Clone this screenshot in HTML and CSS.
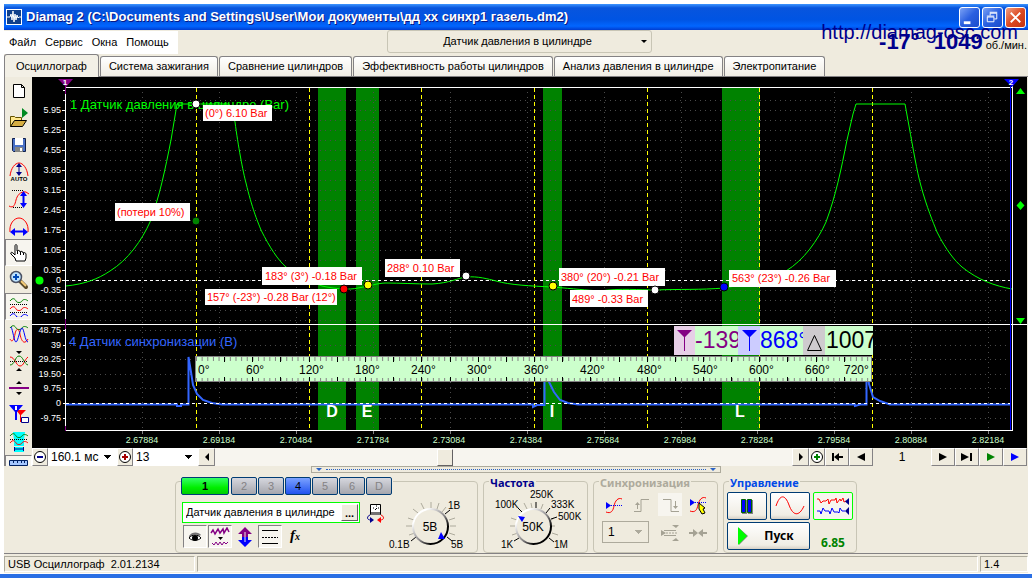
FILE: index.html
```html
<!DOCTYPE html>
<html lang="ru">
<head>
<meta charset="utf-8">
<title>Diamag 2</title>
<link rel="stylesheet" href="styles.css">
</head>
<body>
<div class="app">
  <header class="titlebar">
    <svg class="app-icon" viewBox="0 0 16 16"><rect x="0.500" y="0.500" width="15" height="15" fill="#10408c" stroke="#fff"/><path d="M1 8h3l1-3 1 6 1-9 1 11 1-8 1 6 1-5 1 3 1-1h2" fill="none" stroke="#fff"/></svg>
    <h1 class="title">Diamag 2 (C:\Documents and Settings\User\Мои документы\дд хх синхр1 газель.dm2)</h1>
    <button class="win-btn" aria-label="Свернуть"><svg viewBox="0 0 20 20"><path d="M4 14h7v3H4z" fill="#fff"/></svg></button>
    <button class="win-btn" aria-label="Восстановить"><svg viewBox="0 0 20 20"><path d="M7.500 8V5.500h7v6H12M7 4.500h8M4.500 9.500h7v5h-7zM4 8.500h8" fill="none" stroke="#fff"/></svg></button>
    <button class="win-btn win-close" aria-label="Закрыть"><svg viewBox="0 0 20 20"><path d="M5 5l10 10M15 5L5 15" stroke="#fff" stroke-width="2"/></svg></button>
  </header>

  <div class="menu-row">
    <nav class="menu">
      <button>Файл</button><button>Сервис</button><button>Окна</button><button>Помощь</button>
    </nav>
    <button class="sensor-pick"><span>Датчик давления в цилиндре</span><i class="caret"></i></button>
    <div class="readout"><b>-17°</b><b>1049</b><span>об./мин.</span></div>
    <a class="site" href="#">http://diamag-osc.com</a>
  </div>

  <div class="tabs" role="tablist">
    <button class="tab tab-on" role="tab">Осциллограф</button>
    <button class="tab" role="tab">Система зажигания</button>
    <button class="tab" role="tab">Сравнение цилиндров</button>
    <button class="tab" role="tab">Эффективность работы цилиндров</button>
    <button class="tab" role="tab">Анализ давления в цилиндре</button>
    <button class="tab" role="tab">Электропитание</button>
  </div>

  <main class="work">
    <div class="tools">
      <button class="tool" aria-label="Новый"><svg viewBox="0 0 20 20"><path d="M4.500 3.500h8l3 3v10h-11zM12.500 3.500v3h3" fill="#fff" stroke="#000"/></svg></button>
      <button class="tool" aria-label="Открыть"><svg viewBox="0 0 20 20"><path d="M1.500 18.500v-10h4l1 1h6v3" fill="#ffe78c" stroke="#635100"/><path d="M1.500 18.500l4-6h12l-4 6z" fill="#d6ae42" stroke="#000"/><path d="M13 0l6 5-6 5z" fill="#008a21"/></svg></button>
      <button class="tool" aria-label="Сохранить"><svg viewBox="0 0 20 20"><path d="M3.500 3.500h13v13h-12l-1-1z" fill="#4a71c6" stroke="#10204a"/><path d="M6 3h8v7H6z" fill="#fff"/><path d="M6 12h8v5H6z" fill="#848684"/><path d="M11 13h2v3h-2z" fill="#fff"/></svg></button>
      <button class="tool" aria-label="Авто"><svg viewBox="0 0 20 20"><path d="M1 14C2 6 6 1 10 1s8 5 9 13" fill="none" stroke="#f00"/><path d="M10 3v9" stroke="#00008c" stroke-width="1"/><path d="M7 5l3-4 3 4zM7 10l3 4 3-4z" fill="#00008c"/><text x="10" y="19" class="mini">AUTO</text></svg></button>
      <button class="tool" aria-label="Высота"><svg viewBox="0 0 20 20"><path d="M0 17c5 3 6-2 7-6s4-9 10-8l3 2" fill="none" stroke="#f00"/><path d="M3 1.500h11M4 18.500h10" stroke="#000" stroke-dasharray="1 1"/><path d="M14.500 5v10" stroke="#00f" stroke-width="2"/><path d="M11 7l3.500-5L18 7zM11 14l3.500 5 3.500-5z" fill="#00f"/></svg></button>
      <button class="tool" aria-label="Ширина"><svg viewBox="0 0 20 20"><path d="M1 16C0 8 5 2 10 2s10 6 9 14" fill="none" stroke="#f00"/><path d="M4 15.500h12" stroke="#00f" stroke-width="2"/><path d="M6 12l-5 4 5 4zM14 12l5 4-5 4z" fill="#00f"/></svg></button>
      <button class="tool tool-on" aria-label="Рука"><svg viewBox="0 0 20 20"><path d="M7 18l-1-3-4-4c-1-2 1-2 2-1l2 2V3c0-2 2-2 2 0v5c1-1 3-1 3 1 1-1 3-1 3 1 1-1 3 0 3 1v4l-1 3z" fill="#fff" stroke="#000"/><path d="M8.500 8v3M11.500 9v3M14.500 10v2" stroke="#000"/></svg></button>
      <button class="tool" aria-label="Масштаб"><svg viewBox="0 0 20 20"><path d="M11 11l6 6" stroke="#5a4a29" stroke-width="4" stroke-linecap="round"/><path d="M12 11l5 5" stroke="#f7cf7b" stroke-width="2"/><circle cx="7" cy="7" r="5.500" fill="#bde3ff" stroke="#4a5163" stroke-width="1.500"/><path d="M4 7h6M7 4v6" stroke="#0049b5" stroke-width="2"/></svg></button>
      <button class="tool tool-on" aria-label="Раздельно"><svg viewBox="0 0 20 20"><g fill="none"><path d="M1 4c3-4 5-2 6 0s5 2 6 0 4-2 6 0" stroke="#008200"/><path d="M1 12c3-4 5-2 6 0s5 2 6 0 4-2 6 0" stroke="#f00"/><path d="M1 19c3-4 5-2 6 0s5 2 6 0 4-2 6 0" stroke="#00f"/><path d="M1 7.500h18M1 15.500h18" stroke="#000" stroke-dasharray="1 1"/></g></svg></button>
      <button class="tool" aria-label="Совместно"><svg viewBox="0 0 20 20"><g fill="none"><path d="M1 4c3-4 5-2 6 0s5 2 6 0 4-2 6 0" stroke="#008200"/><path d="M1 15c2 4 4 1 5-5s4-6 5 0 4 12 8 5" stroke="#f00"/><path d="M2 3c2 3 3 15 5 15S11 4 13 4s3 14 6 14" stroke="#00f"/></g></svg></button>
      <button class="tool" aria-label="Сжать"><svg viewBox="0 0 20 20"><path d="M1 6c5 0 6 9 10 9s4-6 8-9" fill="none" stroke="#f00"/><path d="M1 14c5 0 5-9 9-9s5 8 9 9" fill="none" stroke="#008200"/><path d="M1 10.500h18" stroke="#000" stroke-dasharray="1 1"/><path d="M7 0h6l-3 3zM7 20h6l-3-3z"/></svg></button>
      <button class="tool" aria-label="Линия"><svg viewBox="0 0 20 20"><path d="M0 9h20v2H0z" fill="#840084"/><path d="M7 6h6l-3-3zM7 14h6l-3 3z"/></svg></button>
      <button class="tool" aria-label="Маркеры"><svg viewBox="0 0 20 20"><path d="M7 5h10l-5 5v7h-1v-7z" fill="#f00"/><path d="M0 0h14L8 7v8H6V7z" fill="#00f"/><path d="M6 1h2v4H6z" fill="#fff"/><path d="M12.500 12.500h7v5h-7z" fill="#fff" stroke="#00008c"/></svg></button>
      <button class="tool" aria-label="Интервал"><svg viewBox="0 0 20 20"><path d="M4 0h12l-1 8v6H5V8z" fill="#0ff"/><path d="M4 0h12l-3 3H7zM5 15h10v5H5z" fill="#0ff"/><path d="M1 4c3-4 5-2 6 0s5 2 6 0 4-2 6 0" fill="none" stroke="#008200"/><path d="M1 11c3-4 5-2 6 0s5 2 6 0 4-2 6 0" fill="none" stroke="#f00"/><path d="M1 7.500h18" stroke="#000" stroke-dasharray="1 1"/><path d="M5.500 15v4M14.500 15v4M6 17h8" stroke="#00008c"/></svg></button>
      <button class="tool tool-on tool-cut" aria-label="Линейка"><svg viewBox="0 0 20 20"><path d="M0.500 4.500h18v5h-18z" fill="#a5c7ff" stroke="#002163"/><path d="M4.500 5v2M8.500 5v2M12.500 5v2M15.500 5v2" stroke="#002163"/></svg></button>
    </div>

    <div class="scope-col">
      <svg class="scope" viewBox="32 77 995 371">
        <defs>
          <pattern id="rows-a" x="70" y="100" width="5" height="10" patternUnits="userSpaceOnUse"><rect width="1" height="1" fill="#4a4a4a"/></pattern>
          <clipPath id="c1"><rect x="674" y="326" width="64" height="29"/></clipPath>
          <clipPath id="c2"><rect x="738" y="326" width="65" height="29"/></clipPath>
          <clipPath id="c3"><rect x="803" y="326" width="70" height="29"/></clipPath>
        </defs>
        <rect x="32" y="77" width="995" height="371"/>
        <path d="M318 88h28v342h-28zM356 88h23v342h-23zM543 88h19v342h-19zM722 88h38v342h-38z" fill="#008200"/>
        <rect x="67" y="100" width="944" height="221" fill="url(#rows-a)"/>
        <path class="dots" d="M70 330.500h940M70 345.500h940M70 359.500h940M70 374.500h940M70 388.500h940M70 418.500h940"/>
        <path class="dots" d="M142.500 92v338M219.500 92v338M296.500 92v338M373.500 92v338M450.500 92v338M527.500 92v338M604.500 92v338M681.500 92v338M757.500 92v338M834.500 92v338M911.500 92v338M988.500 92v338"/>
        <text class="name-a" x="70" y="109">1 Датчик давления в цилиндре (Bar)</text>
        <text class="name-b" x="69" y="346">4 Датчик синхронизации (В)</text>
        <path class="zero" d="M66 280.500h945"/>
        <path class="trdc" d="M196.500 88v342M309.500 88v342M421.500 88v342M534.500 88v342M647.500 88v342M759.500 88v342M872.500 88v342"/>
        <path class="wave-a" d="M66 286C85 284 98 279 110 271C128 260 142 240 150 222C160 195 165 170 171 140L177 104H229L235 122C238 145 243 172 246 183C252 208 257 220 261 230C270 248 278 260 286 267C300 278 310 281 322 286C335 289 350 290 358 288C370 286 378 283 386 283C400 283 415 284 432 284C450 283 458 278 466 277C478 276 488 279 496 281C510 285 530 286 553 287C575 289 585 290 600 291C620 288 640 290 655 290C680 289 700 290 724 288C745 284 770 282 786 271C804 260 818 240 826 222C836 195 841 170 847 140L853 114L856 104H905L909 126C913 148 917 172 921 186C927 208 933 222 937 232C946 250 955 261 962 267C978 280 995 286 1012 289"/>
        <path class="wave-b" d="M66 404.500H177V406H181V404.500H188.500V357L191 372L193 385L197 394L203 400L212 403L222 404.500H533V407L537 405H544.500V356L549 382L554 392L560 400L568 403L578 404.500H855V406L860 404.500H866.500V360L869 384L873 397L880 401L890 404.500H1011"/>
        <path class="zero" d="M66 403.500h945"/>
        <path class="frame" d="M65.500 84V431M66 87.500h947M32 324.500h995M65 430.500h948M1012.500 84V431"/>
        <path d="M1010.500 86V430" stroke="#00f"/>
        <path class="frame" d="M63 90.500h3M63 100.500h3M62 110.500h4M63 120.500h3M62 130.500h4M63 140.500h3M62 150.500h4M63 160.500h3M62 170.500h4M63 180.500h3M62 190.500h4M63 200.500h3M62 210.500h4M63 220.500h3M62 230.500h4M63 240.500h3M62 250.500h4M63 260.500h3M62 270.500h4M62 280.500h4M62 290.500h4M63 300.500h3M62 310.500h4M63 330.500h3M63 345.500h3M63 359.500h3M63 374.500h3M63 388.500h3M63 403.500h3M63 418.500h3"/>
        <path d="M142.500 431v3M219.500 431v3M296.500 431v3M373.500 431v3M450.500 431v3M527.500 431v3M604.500 431v3M681.500 431v3M757.500 431v3M834.500 431v3M911.500 431v3M988.500 431v3" stroke="#848284"/>
        <path d="M65.500 86v8M65.500 319v10M65.500 426v5" stroke="#840084"/>
        <g class="y-num">
          <text x="61" y="113">5.95</text><text x="61" y="133">5.25</text><text x="61" y="153">4.55</text><text x="61" y="173">3.85</text><text x="61" y="193">3.15</text><text x="61" y="213">2.45</text><text x="61" y="233">1.75</text><text x="61" y="253">1.05</text><text x="61" y="273">0.35</text><text x="61" y="283">0</text><text x="61" y="293">-0.35</text><text x="61" y="313">-1.05</text>
          <text x="61" y="333">48.75</text><text x="61" y="348">39</text><text x="61" y="362">29.25</text><text x="61" y="377">19.50</text><text x="61" y="391">9.75</text><text x="61" y="406">0</text><text x="61" y="421">-9.75</text>
        </g>
        <g class="x-num">
          <text x="142" y="443">2.67884</text><text x="219" y="443">2.69184</text><text x="296" y="443">2.70484</text><text x="373" y="443">2.71784</text><text x="449" y="443">2.73084</text><text x="526" y="443">2.74384</text><text x="603" y="443">2.75684</text><text x="680" y="443">2.76984</text><text x="757" y="443">2.78284</text><text x="834" y="443">2.79584</text><text x="911" y="443">2.80884</text><text x="988" y="443">2.82184</text>
        </g>
        <g class="zone"><text x="332" y="417">D</text><text x="367" y="417">E</text><text x="552" y="417">I</text><text x="740" y="417">L</text></g>

        <path d="M58 79h15l-7 8z" fill="#840084"/><path d="M1004 79h15l-7 8z" fill="#00f"/>
        <g class="flag"><text x="65" y="85">1</text><text x="1011" y="85">2</text></g>
        <path d="M1016 94h9l-4.500-6zM1016 318h9l-4.500 6zM1020.500 201l4 4.500-4 4.500-4-4.500z" fill="#0f0"/>
        <circle cx="39.500" cy="280.500" r="4" fill="#0f0"/>

        <g class="plates"><rect x="203" y="105" width="69" height="16"/><rect x="115" y="203" width="75" height="18"/><rect x="262" y="267" width="100" height="18"/><rect x="205" y="289" width="132" height="16"/><rect x="385" y="259" width="75" height="18"/><rect x="559" y="268" width="106" height="18"/><rect x="570" y="290" width="78" height="17"/><rect x="729" y="270" width="107" height="17"/></g>
        <g class="notes"><text x="205" y="117">(0°) 6.10 Bar</text><text x="117" y="216">(потери 10%)</text><text x="265" y="280">183° (3°) -0.18 Bar</text><text x="207" y="301">157° (-23°) -0.28 Bar (12°)</text><text x="387" y="272">288° 0.10 Bar</text><text x="561" y="281">380° (20°) -0.21 Bar</text><text x="572" y="303">489° -0.33 Bar</text><text x="732" y="282">563° (23°) -0.26 Bar</text></g>
        <g class="points"><circle cx="196" cy="104" r="4" fill="#fff"/><circle cx="196" cy="221" r="4" fill="#008200"/><circle cx="344" cy="289" r="4" fill="#f00"/><circle cx="368" cy="285" r="4" fill="#ff0"/><circle cx="466" cy="276" r="4" fill="#fff"/><circle cx="553" cy="286" r="4" fill="#ff0"/><circle cx="655" cy="290" r="4" fill="#fff"/><circle cx="724" cy="287" r="4" fill="#00f"/></g>

        <rect x="195.500" y="356.500" width="676" height="25" fill="#cfc" stroke="#848284"/>
        <path d="M196 359H871M196 380H871" stroke="#848284" stroke-width="4" stroke-dasharray="1 4.640"/>
        <path class="majors" d="M224.500 357v5M252.500 357v5M280.500 357v5M309.500 357v5M337.500 357v5M365.500 357v5M393.500 357v5M421.500 357v5M450.500 357v5M478.500 357v5M506.500 357v5M534.500 357v5M562.500 357v5M590.500 357v5M619.500 357v5M647.500 357v5M675.500 357v5M703.500 357v5M731.500 357v5M759.500 357v5M787.500 357v5M816.500 357v5M844.500 357v5M224.500 377v4M252.500 377v4M280.500 377v4M309.500 377v4M337.500 377v4M365.500 377v4M393.500 377v4M421.500 377v4M450.500 377v4M478.500 377v4M506.500 377v4M534.500 377v4M562.500 377v4M590.500 377v4M619.500 377v4M647.500 377v4M675.500 377v4M703.500 377v4M731.500 377v4M759.500 377v4M787.500 377v4M816.500 377v4M844.500 377v4"/>
        <g class="degrees"><text x="198" y="374">0°</text><text x="246" y="374">60°</text><text x="299" y="374">120°</text><text x="355" y="374">180°</text><text x="411" y="374">240°</text><text x="467" y="374">300°</text><text x="524" y="374">360°</text><text x="580" y="374">420°</text><text x="637" y="374">480°</text><text x="693" y="374">540°</text><text x="749" y="374">600°</text><text x="805" y="374">660°</text><text x="844" y="374">720°</text></g>

        <rect x="674" y="326" width="199" height="29" fill="#cfc"/>
        <rect x="674" y="326" width="21" height="29" fill="#e7cfe7"/><rect x="738" y="326" width="22" height="29" fill="#ccf"/><rect x="803" y="326" width="22" height="29" fill="#cecbce"/>
        <path d="M677 330h15l-7 7v14h-1v-14z" fill="#840084"/><path d="M742 330h15l-7 7v14h-1v-14z" fill="#00f"/><path d="M807.500 350.500l7-15 7 15z" fill="none" stroke="#000"/>
        <g class="deltas"><text x="695" y="348" fill="#840084" clip-path="url(#c1)">-139°</text><text x="760" y="348" fill="#00f" clip-path="url(#c2)">868°</text><text x="826" y="348" clip-path="url(#c3)">1007°</text></g>
      </svg>

      <div class="transport">
        <button class="zoom-btn" aria-label="Уменьшить"><svg viewBox="0 0 14 14"><circle cx="7" cy="7" r="5.500" fill="#fff" stroke="#000"/><path d="M4 7h6" stroke="#00008c" stroke-width="2"/></svg></button>
        <select class="span-pick" aria-label="Развёртка"><option>160.1 мс</option></select>
        <button class="zoom-btn" aria-label="Увеличить"><svg viewBox="0 0 14 14"><circle cx="7" cy="7" r="5.500" fill="#fff" stroke="#000"/><path d="M4 7h6M7 4v6" stroke="#a50000" stroke-width="2"/></svg></button>
        <select class="scale-pick" aria-label="Масштаб"><option>13</option></select>
        <button class="step" aria-label="Назад"><svg viewBox="0 0 14 14"><path d="M9 3v8L5 7z"/></svg></button>
        <input class="scroll" type="range" min="0" max="1000" value="396" aria-label="Прокрутка">
        <button class="step" aria-label="Вперёд"><svg viewBox="0 0 14 14"><path d="M5 3v8l4-4z"/></svg></button>
        <button class="zoom-btn" aria-label="Добавить"><svg viewBox="0 0 14 14"><circle cx="7" cy="7" r="5.500" fill="#fff" stroke="#000"/><path d="M4 7h6M7 4v6" stroke="#008200" stroke-width="2"/></svg></button>
        <button class="play" aria-label="В начало"><svg viewBox="0 0 14 14"><path d="M2 3h2v8H2zM9 3v8L4 7zM9 6h4v2H9z"/></svg></button>
        <button class="play" aria-label="Предыдущий"><svg viewBox="0 0 14 14"><path d="M11 3v8L3 7z"/></svg></button>
        <output class="frame-no">1</output>
        <button class="play" aria-label="Следующий"><svg viewBox="0 0 14 14"><path d="M3 3v8l8-4z"/></svg></button>
        <button class="play" aria-label="В конец"><svg viewBox="0 0 14 14"><path d="M1 3v8l8-4zM10 3h2v8h-2z"/></svg></button>
        <button class="play" aria-label="Воспроизвести"><svg viewBox="0 0 14 14"><path d="M3 3v8l8-4z" fill="#008200"/></svg></button>
        <button class="play" aria-label="Непрерывно"><svg viewBox="0 0 14 14"><path d="M3 3v8l8-4z" fill="#00f"/></svg></button>
      </div>
    </div>
  </main>

  <div class="splitter"><i class="notch"></i><i class="rail"></i><i class="notch"></i></div>

  <section class="panel">
    <div class="group group-channel">
      <div class="channels">
        <button class="ch ch-main">1</button><button class="ch">2</button><button class="ch">3</button><button class="ch ch-on">4</button><button class="ch">5</button><button class="ch">6</button><button class="ch">D</button>
      </div>
      <div class="channel-body">
        <div class="channel-left">
          <div class="sensor-row">
            <div class="sensor-box"><input type="text" value="Датчик давления в цилиндре" aria-label="Датчик"><button class="dots-btn">...</button></div>
            <button class="flat" aria-label="Калибровка"><svg viewBox="0 0 20 20"><path d="M4.500 1.500h10v10h-10z" fill="#fff" stroke="#000"/><path d="M5 9h9v3H5z" fill="#737173"/><path d="M7 5h1M10 3h1M12 5h1M9 7l2-2" stroke="#000"/><path d="M4 12c-3 1-4 5 1 5" fill="none" stroke="#00008c"/><path d="M4 14l4 3-4 3z" fill="#00008c"/><path d="M15 12c3 1 4 5-1 5" fill="none" stroke="#f00"/><path d="M15 14l-4 3 4 3z" fill="#f00"/></svg></button>
          </div>
          <div class="mode-row">
            <button class="flat flat-on" aria-label="Видимость"><svg viewBox="0 0 20 20"><path d="M4 9c3-5 10-4 12-1l-2 1c-3-3-7-2-10 2z" fill="#737173"/><path d="M4 11c3-4 9-4 12 0-3 3-9 3-12 0z" fill="#fff" stroke="#000"/><circle cx="10" cy="11" r="3"/></svg></button>
            <button class="flat flat-on" aria-label="Фильтр"><svg viewBox="0 0 20 20"><path d="M1 6l2-3 2 4 3-5 2 4 3-4 1 4 3-5 2 4" fill="none" stroke="#840084" stroke-width="1.500"/><path d="M8 10h5l-2.500 3z"/><path d="M2 16l2 2 2-3 2 3 2-3 2 3 2-3 2 2 2-2" fill="none" stroke="#840084"/></svg></button>
            <button class="flat" aria-label="Инверсия"><svg viewBox="0 0 20 20"><path d="M10 0l7 7h-4v3H7V7H3z" fill="#840084"/><path d="M10 20l7-7h-4v-3H7v3H3z" fill="#00f"/><path d="M10 5v10" stroke="#efebde"/></svg></button>
            <button class="flat flat-on" aria-label="Сетка"><svg viewBox="0 0 20 20"><path d="M2 3.500h16M2 16.500h16" stroke="#000"/><path d="M2 10.500h16" stroke="#000" stroke-dasharray="2 1"/></svg></button>
            <button class="flat fx" aria-label="Функция"><i>f</i><sub>x</sub></button>
          </div>
        </div>
        <svg class="knob knob-volt" viewBox="386 488 90 64">
          <defs><linearGradient id="rim" x1="0" y1="0" x2="1" y2="1"><stop offset="0.200" stop-color="#fff"/><stop offset="0.550" stop-color="#848284"/><stop offset="0.750" stop-color="#000"/></linearGradient></defs>
          <path class="ticks" d="M414 533l-6 2M412 526h-7M413 520l-6-2M417 513l-5-4M423 509l-3-6M430 508v-6M436 509l2-6M441 512l4-5M448 520l6-2M449 526h6M448 533l6 2"/>
          <path class="ticks-hi" d="M444 514l5-4M415 537l-5 4M446 537l5 4"/>
          <circle cx="429.500" cy="526.500" r="17.500" fill="#efebde" stroke="url(#rim)" stroke-width="2"/>
          <path d="M440 532l4 7h-7z" fill="#00f"/>
          <text class="knob-val" x="429" y="531">5В</text><text x="447" y="509">1В</text><text x="388" y="548">0.1В</text><text x="450" y="548">5В</text>
        </svg>
      </div>
    </div>

    <div class="group group-rate">
      <h2 class="legend legend-navy">Частота</h2>
      <svg class="knob knob-rate" viewBox="486 488 98 64">
        <path class="ticks" d="M518 533l-6 2M516 526h-6M517 520l-6-2M527 509l-3-6M532 508l-1-5M541 509l2-5M554 518l-4 3M555 526h-5M552 533l6 2"/>
        <path class="ticks-hi" d="M522 512l-4-4M536 508v-6M546 513l4-5M551 519l6-2M519 538l-5 3M549 538l5 4"/>
        <circle cx="533.500" cy="526.500" r="17.500" fill="#efebde" stroke="url(#rim)" stroke-width="2"/>
        <path d="M518 516l7 1-3 5z" fill="#00f"/>
        <text class="knob-val" x="533" y="531">50K</text><text x="530" y="498">250K</text><text x="495" y="508">100K</text><text x="551" y="508">333K</text><text x="558" y="520">500K</text><text x="501" y="548">1K</text><text x="554" y="548">1M</text>
      </svg>
    </div>

    <div class="group group-sync">
      <h2 class="legend legend-gray">Синхронизация</h2>
      <div class="sync-grid">
        <button class="flat" aria-label="Уровень"><svg viewBox="0 0 20 20"><path d="M2 17c5 2 7-1 8-6s4-9 8-7" fill="none" stroke="#f00"/><path d="M5 10.500h14" stroke="#00f" stroke-dasharray="1 1"/><path d="M2 7l5 3.500L2 14z" fill="#00f"/></svg></button>
        <button class="flat" aria-label="Фронт" disabled><svg viewBox="0 0 20 20"><path d="M2 16.500h7v-12h8" fill="none" stroke="#a5a294"/><path d="M5.500 14V8" stroke="#a5a294"/><path d="M3 10l2.500-3L8 10z" fill="#a5a294"/></svg></button>
        <button class="flat flat-check" aria-label="Спад" disabled><svg viewBox="0 0 20 20"><path d="M3 4.500h8v12h8" fill="none" stroke="#a5a294"/><path d="M15.500 6v6" stroke="#a5a294"/><path d="M13 11l2.500 3 2.500-3z" fill="#a5a294"/></svg></button>
        <button class="flat" aria-label="Автоуровень"><svg viewBox="0 0 20 20"><path d="M2 16c5 2 7-1 8-6s4-9 8-7" fill="none" stroke="#f00"/><path d="M5 7.500h14" stroke="#00f" stroke-dasharray="1 1"/><path d="M2 4l5 3.500L2 11z" fill="#00f"/><path d="M11 8l6 5-2 1 2 4-3 1-3-5z" fill="#ff0" stroke="#000"/></svg></button>
        <select class="sync-pick" aria-label="Канал синхронизации"><option>1</option></select>
        <button class="flat" aria-label="Порог" disabled><svg viewBox="0 0 20 20"><path d="M1 7l5 3-5 3zM12 2h7l-3 3zM12 18h7l-3-3z" fill="#a5a294"/><path d="M4 7.500h12M4 12.500h12" stroke="#a5a294"/><path d="M6 10h11" stroke="#a5a294" stroke-dasharray="2 1"/></svg></button>
        <button class="flat" aria-label="Гистерезис" disabled><svg viewBox="0 0 20 20"><path d="M1 9h4V6l5 4-5 4v-3H1zM19 9h-4V6l-5 4 5 4v-3h4z" fill="#a5a294"/></svg></button>
      </div>
    </div>

    <div class="group group-run">
      <h2 class="legend legend-blue">Управление</h2>
      <div class="run-grid">
        <button class="xp" aria-label="Пауза"><svg viewBox="0 0 30 20"><path d="M10 4h5v14h-5zM16 4h5v14h-5z" fill="#848284"/><path d="M9.500 3.500h4v13h-4zM15.500 3.500h4v13h-4z" fill="#00f" stroke="#006500"/></svg></button>
        <button class="xp" aria-label="Один канал"><svg viewBox="0 0 30 20"><path d="M1 10C5-2 10-2 14 9s10 12 15 1" fill="none" stroke="#f00"/></svg></button>
        <button class="xp xp-on" aria-label="Два канала"><svg viewBox="0 0 32 20"><path d="M0 3h2l2 4 2-2h3l2-2 1 5 2-4h4l1-2 1 5 3-4 1 2 2-3 1 4 2-1" fill="none" stroke="#f00"/><path d="M0 15h3l1 3 2-6 2 3h4l1 3 2-6 2 4h4l1 1 1-5 2 3h3" fill="none" stroke="#00f"/><path d="M32 2v7l-4-3.500zM32 11v8l-4-4z" fill="#00008c"/></svg></button>
        <button class="xp xp-run"><svg viewBox="0 0 12 20"><path d="M2 2l9 8-9 9z" fill="#848284"/><path d="M1 1l9 9-9 9z" fill="#0f0"/></svg><span>Пуск</span></button>
        <output class="fps">6.85</output>
      </div>
    </div>
  </section>

  <footer class="status"><span class="cell">USB Осциллограф&nbsp; 2.01.2134</span><span class="cell cell-wide"></span><span class="cell cell-end">1.4</span></footer>
</div>
<div class="desktop-strip"></div>
</body>
</html>
```
FILE: styles.css
```css
* { box-sizing: border-box; }
body { margin: 0; background: #fff; font: 11px/13px "Liberation Sans", Arial, sans-serif; color: #000; overflow: hidden; }
button, select, input { font: inherit; color: inherit; margin: 0; padding: 0; border: 0; background: none; border-radius: 0; }
h1, h2 { margin: 0; }
svg { display: block; }
.app { margin: 4px 4px 0; background: #efebde; }

.titlebar { display: flex; align-items: center; gap: 2px; height: 26px; padding: 0 2px; background: linear-gradient(#3d95ff 0, #0855dd 15%, #0054e3 60%, #0166ff 85%, #003dd0 100%); }
.app-icon { width: 16px; height: 16px; }
.title { flex: 1; padding-left: 2px; font: bold 13px/16px "Liberation Sans", Arial, sans-serif; color: #fff; text-shadow: 1px 1px #0a1883; white-space: nowrap; overflow: hidden; }
.win-btn { width: 21px; height: 21px; border: 1px solid #fff; border-radius: 3px; background: linear-gradient(135deg, #7ba2f5, #2a5fe0 50%, #1a4dcc); }
.win-close { background: linear-gradient(135deg, #f0a084, #dd4a22 50%, #c43310); }

.menu-row { position: relative; display: grid; grid-template-columns: 383px 265px 1fr; height: 24px; align-items: start; }
.menu { display: flex; gap: 9px; justify-self: start; height: 23px; padding: 0 9px 0 5px; background: #fff; margin-top: 1px; }
.sensor-pick { display: flex; align-items: center; height: 23px; border: 1px solid #c8c5b5; border-radius: 3px; padding: 0 4px 0 6px; }
.sensor-pick span { flex: 1; }
.caret { border: 3px solid transparent; border-top-color: #000; border-bottom: 0; }
.readout { display: flex; justify-content: flex-end; align-items: baseline; padding: 1px 1px 0 0; color: #00008c; }
.readout b { font: bold 22px/22px "Liberation Sans", Arial, sans-serif; margin-right: 14px; }
.readout b + b { margin-right: 3px; }
.readout span { color: #000; }
.site { position: absolute; right: 10px; top: -8px; font: 20px/20px "Liberation Sans", Arial, sans-serif; color: #00008c; text-decoration: none; white-space: nowrap; }

.tabs { display: flex; align-items: flex-end; height: 23px; border-bottom: 1px solid #848284; gap: 1px; }
.tab { height: 20px; padding: 0 8px; border: 1px solid #848284; border-bottom: 0; border-radius: 3px 3px 0 0; background: linear-gradient(#fff, #f0ede4); white-space: nowrap; }
.tab-on { height: 23px; margin-bottom: -1px; padding: 0 11px; background: #f3f0e6; }

.work { display: grid; grid-template-columns: 28px 1fr; padding-right: 1px; }
.tools { display: flex; flex-direction: column; height: 0; min-height: 100%; overflow: hidden; border-left: 1px solid #848284; }
.tool { flex: none; height: 27px; display: grid; place-items: center; }
.tool svg { width: 20px; height: 20px; }
.tool-on, .flat-on { border: 1px solid; border-color: #848284 #fff #fff #848284; background: #f7f5ef; }
.tool-cut { align-items: start; }
.mini { font: bold 6px "Liberation Sans", sans-serif; text-anchor: middle; }

.scope { width: 100%; height: auto; font-family: "Liberation Sans", Arial, sans-serif; }
.dots { stroke: #4a4a4a; stroke-dasharray: 1 4; fill: none; }
.name-a { font-size: 13px; fill: #0f0; }
.name-b { font-size: 13px; fill: #36f; }
.zero { stroke: #fff; stroke-dasharray: 3 3; }
.trdc { stroke: #ff0; stroke-dasharray: 4 3; }
.wave-a { fill: none; stroke: #0f0; }
.wave-b { fill: none; stroke: #36f; stroke-width: 2; }
.frame { stroke: #fff; fill: none; }
.majors { stroke: #000; }
.y-num { font-size: 9px; fill: #fff; text-anchor: end; }
.x-num { font-size: 9px; fill: #cfc; text-anchor: middle; }
.zone { font: bold 16px "Liberation Sans", sans-serif; fill: #fff; text-anchor: middle; }
.flag { font: bold 8px "Liberation Sans", sans-serif; fill: #fff; text-anchor: middle; }
.plates { fill: #fff; }
.notes { font-size: 11px; fill: #f00; }
.points { stroke: #000; stroke-width: 1; }
.degrees { font-size: 12px; }
.deltas { font-size: 23px; }

.transport { display: flex; height: 18px; }
.zoom-btn, .step, .play { display: grid; place-items: center; border: 1px solid; border-color: #fff #848284 #848284 #fff; background: #efebde; }
.zoom-btn { width: 16px; }
.step { width: 17px; }
.play { width: 24px; }
.zoom-btn svg, .step svg, .play svg { width: 14px; height: 14px; }
.span-pick, .scale-pick { appearance: none; padding-left: 3px; background: #fff; font-size: 12px; }
.span-pick { width: 69px; }
.scale-pick { width: 65px; }
.span-pick, .scale-pick, .sync-pick { background-repeat: no-repeat; background-image: linear-gradient(to bottom left, #000 50%, transparent 50%), linear-gradient(to bottom right, #000 50%, transparent 50%); background-size: 4px 4px; background-position: right 9px center, right 5px center; }
.scroll { flex: 1; min-width: 0; appearance: none; background: #f7f5ef; height: 18px; }
.scroll::-webkit-slider-thumb { appearance: none; width: 16px; height: 17px; background: #efebde; border: 1px solid; border-color: #fff #636163 #636163 #fff; }
.frame-no { width: 58px; text-align: center; font: 12px/18px "Liberation Sans", sans-serif; }

.splitter { display: flex; align-items: center; gap: 4px; width: 40%; margin-left: 30%; height: 7px; padding: 0 4px; border: 1px solid #adaa9c; }
.notch { border: 3px solid transparent; border-top-color: #2a62c4; border-bottom: 0; }
.rail { flex: 1; border-top: 1px dotted #2a62c4; }

.panel { display: flex; gap: 5px; height: 81px; padding: 8px 0 0 171px; border-bottom: 1px solid #848284; }
.group { height: 72px; border: 1px solid #c8c5b5; border-radius: 4px; display: flex; flex-direction: column; }
.group-channel { width: 303px; padding-left: 5px; }
.group-rate { width: 105px; }
.group-sync { width: 125px; }
.group-run { width: 134px; }
.legend { align-self: flex-start; flex: none; margin: -6px 0 0 5px; padding: 0 1px; background: #efebde; font: bold 11px/13px "Noto Sans", sans-serif; }
.legend-navy { color: #00008c; }
.legend-gray { color: #adaa9c; }
.legend-blue { color: #0049e7; }
.channels { display: flex; flex: none; gap: 1px; width: 212px; margin-top: -5px; background: #efebde; }
.ch { width: 26px; height: 18px; border: 1px solid #003c74; border-radius: 2px; background: linear-gradient(#d6d7de, #a5a6ad); color: #848284; }
.ch-main { width: 48px; margin-right: 1px; background: linear-gradient(#3f6, #0e0 60%, #0c0); color: #000; font-weight: bold; }
.ch-on { background: linear-gradient(#7ba2ff, #2152ef); color: #000; }
.channel-body { display: flex; }
.channel-left { width: 206px; padding-top: 7px; }
.sensor-row { display: flex; gap: 4px; align-items: center; height: 21px; margin-left: 1px; }
.sensor-box { display: flex; width: 178px; height: 21px; border: 1px solid #0f0; background: #fff; padding: 1px; flex: none; }
.sensor-box input { flex: 1; min-width: 0; padding-left: 2px; }
.dots-btn { width: 17px; border: 1px solid; border-color: #fff #636163 #636163 #fff; background: #efebde; font-weight: bold; line-height: 8px; }
.mode-row { display: flex; gap: 1px; margin: 2px 0 0 2px; }
.flat { width: 24px; height: 23px; display: grid; place-items: center; }
.flat svg { width: 20px; height: 20px; }
.flat-check { background: #f7f5ef; }
.fx { display: flex; align-items: baseline; justify-content: center; font: bold italic 15px/20px "Liberation Serif", serif; }
.fx sub { font-size: 10px; }
.knob { flex: none; font: 10px "Liberation Sans", sans-serif; }
.knob-volt { width: 90px; height: 64px; margin-top: -7px; }
.knob-rate { width: 98px; height: 64px; margin: -1px 0 0 2px; }
.knob-val { font-size: 12px; text-anchor: middle; }
.ticks { stroke: #adaa9c; }
.ticks-hi { stroke: #000; }
.sync-grid { display: grid; grid-template-columns: repeat(4, 24px); gap: 5px 4px; padding: 4px 0 0 8px; }
.sync-pick { grid-column: span 2; width: 47px; height: 22px; padding-left: 5px; border: 1px solid #adaa9c; appearance: none; font-size: 12px; background-image: linear-gradient(to bottom left, #adaa9c 50%, transparent 50%), linear-gradient(to bottom right, #adaa9c 50%, transparent 50%); }
.run-grid { display: grid; grid-template-columns: 40px 40px 40px; gap: 2px 3px; padding: 3px 0 0 3px; }
.xp { height: 28px; display: grid; place-items: center; border: 1px solid #003c74; border-radius: 2px; background: linear-gradient(#fff, #f0ede4 85%, #d6d0c5); }
.xp svg { height: 20px; }
.xp-on { border: 1px solid #0f0; background: #f7f5ef; }
.xp-run { grid-column: span 2; display: flex; align-items: center; padding-left: 9px; font: bold 12px/14px "Noto Sans", sans-serif; }
.xp-run svg { width: 12px; }
.xp-run span { flex: 1; }
.fps { align-self: end; color: #008200; font: bold 12px/14px "Noto Sans", sans-serif; text-align: center; }

.status { display: flex; gap: 2px; height: 19px; padding: 2px 0 1px; }
.cell { width: 191px; padding: 1px 3px; border: 1px solid; border-color: #adaa9c #fff #fff #adaa9c; white-space: nowrap; line-height: 13px; }
.cell-wide { flex: 1; }
.cell-end { width: 48px; }
.desktop-strip { height: 4px; margin-top: 1px; background: #2a6fe4; }
```
